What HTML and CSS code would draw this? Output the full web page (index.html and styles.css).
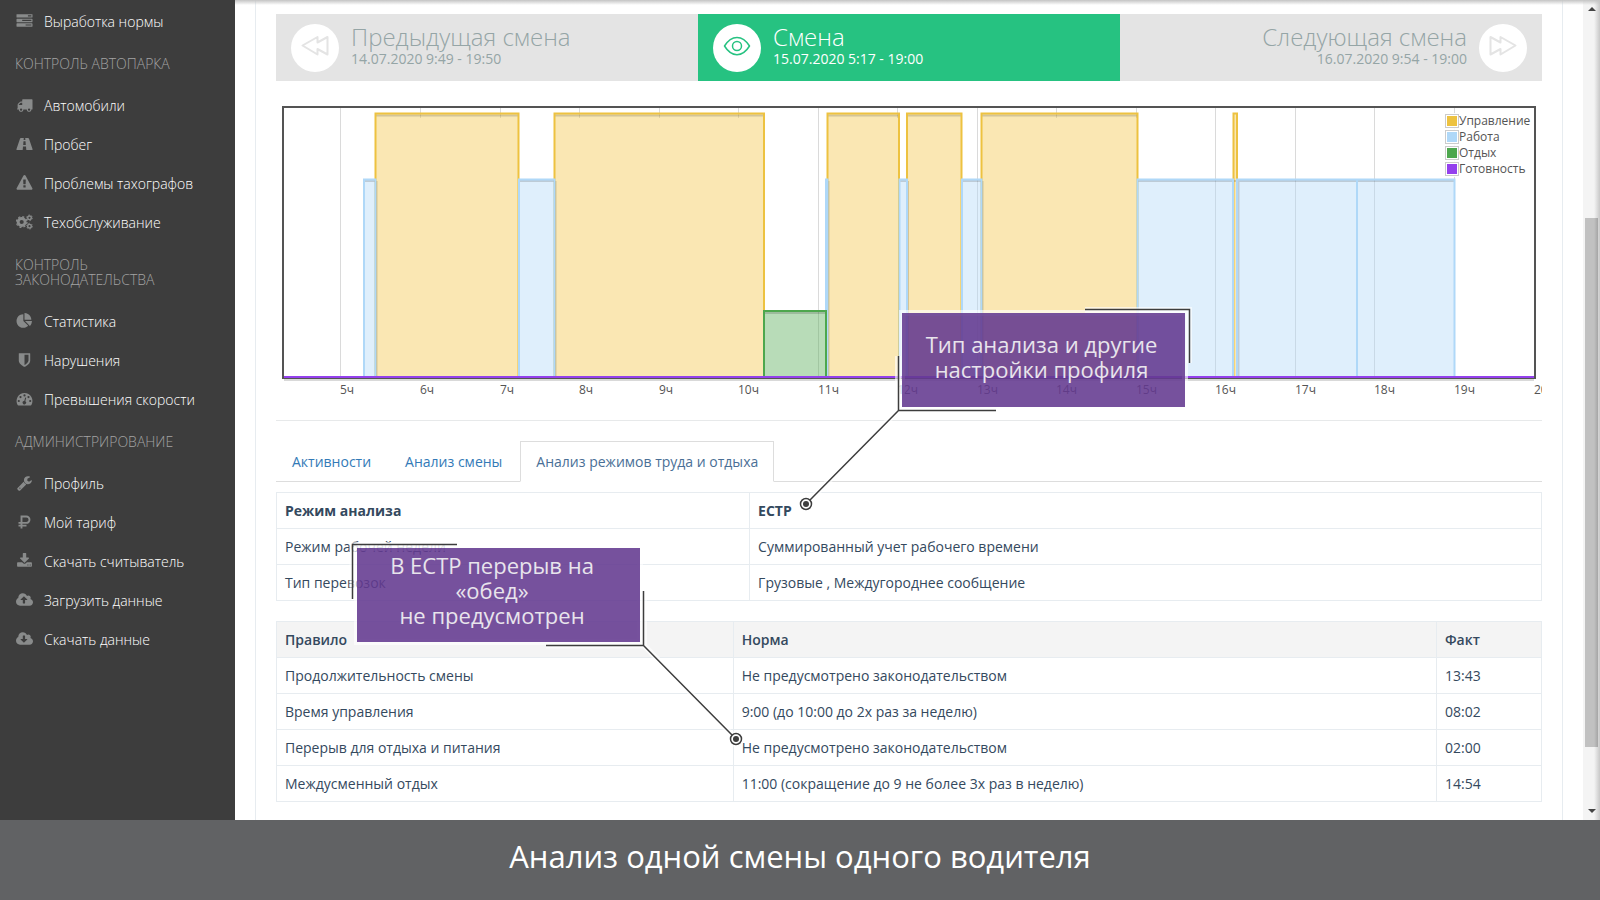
FILE: index.html
```html
<!DOCTYPE html>
<html lang="ru">
<head>
<meta charset="utf-8">
<title>Анализ смены</title>
<link rel="stylesheet" href="styles.css">
</head>
<body>
<div class="screen">
  <nav class="sidebar" aria-label="Меню">
    <a class="item" href="#"><svg class="ico" viewBox="0 0 1792 1792"><path d="M1024 1408h640v-128h-640v128zm-384-512h1024v-128h-1024v128zm640-512h384v-128h-384v128zm512 832v256q0 26-19 45t-45 19h-1664q-26 0-45-19t-19-45v-256q0-26 19-45t45-19h1664q26 0 45 19t19 45zm0-512v256q0 26-19 45t-45 19h-1664q-26 0-45-19t-19-45v-256q0-26 19-45t45-19h1664q26 0 45 19t19 45zm0-512v256q0 26-19 45t-45 19h-1664q-26 0-45-19t-19-45v-256q0-26 19-45t45-19h1664q26 0 45 19t19 45z"/></svg>Выработка нормы</a>
    <h2 class="group">Контроль автопарка</h2>
    <a class="item" href="#"><svg class="ico" viewBox="0 0 1792 1792"><path d="M640 1408q0-52-38-90t-90-38-90 38-38 90 38 90 90 38 90-38 38-90zm-384-512h384v-256h-158q-13 0-22 9l-195 195q-9 9-9 22v30zm1280 512q0-52-38-90t-90-38-90 38-38 90 38 90 90 38 90-38 38-90zm256-1088v1024q0 15-4 26.5t-13.5 18.5-16.5 11.5-23.5 6-22.5 2-25.5 0-22.5-.5q0 106-75 181t-181 75-181-75-75-181h-384q0 106-75 181t-181 75-181-75-75-181h-64q-3 0-22.5.5t-25.5 0-22.5-2-23.5-6-16.5-11.5-13.5-18.5-4-26.5q0-26 19-45t45-19v-320q0-8-.5-35t0-38 2.5-34.5 6.5-37 14-30.5 22.5-30l198-198q19-19 50.5-32t58.5-13h160v-192q0-26 19-45t45-19h1024q26 0 45 19t19 45z"/></svg>Автомобили</a>
    <a class="item" href="#"><svg class="ico" viewBox="0 0 16 16"><path fill-rule="evenodd" d="M4.4 2h2.9l-.2 2h1.8l-.2-2h2.9c.4 0 .7.3.9.7L16 13c.2.6 0 1-.5 1H9.8l-.3-3.500h-3L6.200 14H.5c-.5 0-.7-.4-.5-1L3.500 2.700c.2-.4.5-.7.9-.7zM7 5.200 6.700 9h2.600L9 5.200z"/></svg>Пробег</a>
    <a class="item" href="#"><svg class="ico" viewBox="0 0 1792 1792"><path d="M1024 1375v-190q0-14-9.5-23.5t-22.5-9.5h-192q-13 0-22.5 9.500t-9.500 23.500v190q0 14 9.500 23.500t22.500 9.500h192q13 0 22.500-9.500t9.500-23.500zm-2-374l18-459q0-12-10-19-13-11-24-11h-220q-11 0-24 11-10 7-10 21l17 457q0 10 10 16.500t24 6.500h185q14 0 23.500-6.500t10.500-16.500zm-14-934l768 1408q35 63-2 126-17 29-46.500 46t-63.500 17h-1536q-34 0-63.500-17t-46.500-46q-37-63-2-126l768-1408q17-31 47-49t65-18 65 18 47 49z"/></svg>Проблемы тахографов</a>
    <a class="item" href="#"><svg class="ico" viewBox="0 0 18 16"><g fill="none" stroke="currentColor"><circle cx="6" cy="8" r="3.700" stroke-width="3"/><circle cx="6" cy="8" r="5.600" stroke-width="1.400" stroke-dasharray="2.200 2.198"/><circle cx="14.300" cy="3.600" r="1.900" stroke-width="1.500"/><circle cx="14.300" cy="3.600" r="3" stroke-width="1" stroke-dasharray="1.570 1.571"/><circle cx="14.300" cy="12.400" r="1.900" stroke-width="1.500"/><circle cx="14.300" cy="12.400" r="3" stroke-width="1" stroke-dasharray="1.570 1.571"/></g></svg>Техобслуживание</a>
    <h2 class="group">Контроль законодательства</h2>
    <a class="item" href="#"><svg class="ico" viewBox="0 0 1792 1792"><path d="M768 890l546 546q-106 108-247.500 168t-298.500 60q-209 0-385.500-103t-279.500-279.500-103-385.500 103-385.500 279.500-279.500 385.500-103v762zm187 6h773q0 157-60 298.500t-168 247.500zm709-128h-768v-768q209 0 385.500 103t279.500 279.500 103 385.500z"/></svg>Статистика</a>
    <a class="item" href="#"><svg class="ico" viewBox="0 0 1792 1792"><path d="M1344 960v-640h-448v1137q119-63 213-137 235-184 235-360zm192-768v768q0 86-33.500 170.500t-83 150-118 127.500-126.500 103-121 77.500-89.500 49.500-42.500 20q-12 6-26 6t-26-6q-16-7-42.500-20t-89.500-49.500-121-77.500-126.500-103-118-127.500-83-150-33.500-170.500v-768q0-26 19-45t45-19h1152q26 0 45 19t19 45z"/></svg>Нарушения</a>
    <a class="item" href="#"><svg class="ico" viewBox="0 0 16 16"><path fill-rule="evenodd" d="M8 2a8 8 0 0 1 6.900 12c-.2.300-.4.400-.7.400H1.800c-.3 0-.5-.1-.7-.4A8 8 0 0 1 8 2zM2.300 8.900a1.100 1.100 0 1 0 0 2.200 1.100 1.100 0 0 0 0-2.200zM4 5a1.100 1.100 0 1 0 0 2.200A1.100 1.100 0 0 0 4 5zM8 3.300a1.100 1.100 0 1 0 0 2.200 1.100 1.100 0 0 0 0-2.200zM12 5a1.100 1.100 0 1 0 0 2.200A1.100 1.100 0 0 0 12 5zM13.700 8.900a1.100 1.100 0 1 0 0 2.200 1.100 1.100 0 0 0 0-2.200zM8.700 6.400l-.9 3.500a1.700 1.700 0 1 0 1 .3l.9-3.500z"/></svg>Превышения скорости</a>
    <h2 class="group">Администрирование</h2>
    <a class="item" href="#"><svg class="ico" viewBox="0 0 1792 1792"><path d="M448 1472q0-26-19-45t-45-19-45 19-19 45 19 45 45 19 45-19 19-45zm644-420l-682 682q-37 37-90 37-52 0-91-37l-106-108q-38-36-38-90 0-53 38-91l681-681q39 98 114.500 173.500t173.500 114.500zm634-435q0 39-23 106-47 134-164.500 217.500t-258.500 83.500q-185 0-316.500-131.500t-131.500-316.500 131.500-316.500 316.500-131.500q58 0 121.500 16.500t107.500 46.500q16 11 16 28t-16 28l-293 169v224l193 107q5-3 79-48.500t135.500-81 70.500-35.500q15 0 23.500 10t8.500 25z"/></svg>Профиль</a>
    <a class="item" href="#"><svg class="ico" viewBox="0 0 16 16"><path fill="none" stroke="currentColor" stroke-width="1.900" d="M5 14.500V2.500h4.800a3.200 3.200 0 0 1 0 6.400H2M2 11.600h8"/></svg>Мой тариф</a>
    <a class="item" href="#"><svg class="ico" viewBox="0 0 1792 1792"><path d="M1344 1344q0-26-19-45t-45-19-45 19-19 45 19 45 45 19 45-19 19-45zm256 0q0-26-19-45t-45-19-45 19-19 45 19 45 45 19 45-19 19-45zm128-224v320q0 40-28 68t-68 28h-1472q-40 0-68-28t-28-68v-320q0-40 28-68t68-28h465l135 136q58 56 136 56t136-56l136-136h464q40 0 68 28t28 68zm-325-569q17 41-14 70l-448 448q-18 19-45 19t-45-19l-448-448q-31-29-14-70 17-39 59-39h256v-448q0-26 19-45t45-19h256q26 0 45 19t19 45v448h256q42 0 59 39z"/></svg>Скачать считыватель</a>
    <a class="item" href="#"><svg class="ico" viewBox="-64 0 1920 1792"><path d="M1216 864q0-14-9-23l-352-352q-9-9-23-9t-23 9l-351 351q-10 12-10 24 0 14 9 23t23 9h224v352q0 13 9.500 22.500t22.500 9.500h192q13 0 22.500-9.500t9.500-22.500v-352h224q13 0 22.500-9.500t9.500-22.500zm640 288q0 159-112.500 271.500t-271.500 112.500h-1088q-185 0-316.500-131.500t-131.500-316.500q0-130 70-240t188-165q-2-30-2-43 0-212 150-362t362-150q156 0 285.500 87t188.500 231q71-62 166-62 106 0 181 75t75 181q0 76-41 138 130 31 213.500 135.500t83.500 238.500z"/></svg>Загрузить данные</a>
    <a class="item" href="#"><svg class="ico" viewBox="-64 0 1920 1792"><path d="M1216 928q0-14-9-23t-23-9h-224v-352q0-13-9.500-22.500t-22.500-9.500h-192q-13 0-22.500 9.500t-9.500 22.500v352h-224q-13 0-22.500 9.500t-9.500 22.500q0 14 9 23l352 352q9 9 23 9t23-9l351-351q10-12 10-24zm640 224q0 159-112.500 271.500t-271.500 112.500h-1088q-185 0-316.500-131.500t-131.500-316.500q0-130 70-240t188-165q-2-30-2-43 0-212 150-362t362-150q156 0 285.500 87t188.500 231q71-62 166-62 106 0 181 75t75 181q0 76-41 138 130 31 213.500 135.500t83.500 238.500z"/></svg>Скачать данные</a>
  </nav>

  <main class="main">
    <div class="panel">
      <div class="shifts">
        <a class="shift" href="#">
          <span class="disc"><svg viewBox="0 0 48 48"><path d="M11.500 21.500 26.500 13v5.500L36.500 13v17.500L26.500 25v5.500z"/></svg></span>
          <span class="shift-text"><span class="shift-title">Предыдущая смена</span><span class="shift-time">14.07.2020 9:49 - 19:50</span></span>
        </a>
        <a class="shift current" href="#">
          <span class="disc"><svg viewBox="0 0 48 48"><path d="M11.500 22c7-11.500 18-11.500 25 0-7 11.500-18 11.500-25 0z"/><circle cx="24" cy="22" r="4.500"/></svg></span>
          <span class="shift-text"><span class="shift-title">Смена</span><span class="shift-time">15.07.2020 5:17 - 19:00</span></span>
        </a>
        <a class="shift next" href="#">
          <span class="disc"><svg viewBox="0 0 48 48"><path d="M36.500 21.500 21.500 13v5.500L11.500 13v17.500L21.500 25v5.500z"/></svg></span>
          <span class="shift-text"><span class="shift-title">Следующая смена</span><span class="shift-time">16.07.2020 9:54 - 19:00</span></span>
        </a>
      </div>

      <svg class="chart" viewBox="276 100 1266 300" role="img" aria-label="График активностей смены">
        <path class="grid" d="M340.500 107V377M420.500 107V377M500.500 107V377M579.500 107V377M659.500 107V377M738.500 107V377M818.500 107V377M897.500 107V377M977.500 107V377M1056.500 107V377M1136.500 107V377M1215.500 107V377M1295.500 107V377M1374.500 107V377M1454.500 107V377"/>
        <g class="drive-fill">
          <path class="soft" d="M376 113h143v5H376zM555 113h209v5H555zM828 113h72v5h-72zM907 113h55v5h-55zM982 113h156v5H982zM1233 113h5v5h-5z"/>
          <path d="M376 118h143v259H376zM555 118h209v259H555zM828 118h72v259h-72zM907 118h55v259h-55zM982 118h156v259H982zM1233 118h5v259h-5z"/>
        </g>
        <path class="shade" d="M376 115.500H519M555 115.500H764M828 115.500H900M907 115.500H962M982 115.500H1138"/>
        <path class="drive" d="M375.500 377V113.500H518.500V377M554.500 377V113.500H764V377M827.500 377V113.500H899V377M907 377V113.500H961.500V377M981.500 377V113.500H1137.500V377M1233.500 377V113.500H1237V377"/>
        <path class="work-fill" d="M364 180h12v197h-12zM519 180h36v197h-36zM900 180h7v197h-7zM962 180h20v197h-20zM1138 180h95v197h-95zM1238 180h217v197h-217z"/>
        <path class="shade" d="M364 181H376M519 181H555M900 181H907M962 181H981M1138 181H1455M376.500 181V377M555.500 181V377M828.500 181V377M908 181V377M982.500 181V377M1238.500 181V377"/>
        <path class="work" d="M364 377V179.500H375.500V377M519 377V179.500H554.500V377M826 377V179.500H827.500V377M899.500 377V179.500H907V377M962 377V179.500H981.500V377M1137.500 377V179.500H1233V377M1237 377V179.500H1357V377M1357 179.500H1454.500V377"/>
        <path class="rest-fill" d="M764 311h62v66h-62z"/>
        <path class="shade" d="M765 313H825M284 380H1534"/>
        <path class="rest" d="M764 377V311H826V377"/>
        <rect class="frame" x="283" y="107" width="1252" height="271"/>
        <path class="ready" d="M284 377H1534"/>
        <g class="ticks">
          <text x="340" y="394">5ч</text><text x="420" y="394">6ч</text><text x="500" y="394">7ч</text><text x="579" y="394">8ч</text><text x="659" y="394">9ч</text><text x="738" y="394">10ч</text><text x="818" y="394">11ч</text><text x="897" y="394">12ч</text><text x="977" y="394">13ч</text><text x="1056" y="394">14ч</text><text x="1136" y="394">15ч</text><text x="1215" y="394">16ч</text><text x="1295" y="394">17ч</text><text x="1374" y="394">18ч</text><text x="1454" y="394">19ч</text><text x="1534" y="394">20ч</text>
        </g>
        <rect class="legend-bg" x="1445" y="113" width="84" height="64"/>
        <g class="legend-box"><rect x="1445.500" y="114.500" width="13" height="13"/><rect x="1445.500" y="130.500" width="13" height="13"/><rect x="1445.500" y="146.500" width="13" height="13"/><rect x="1445.500" y="162.500" width="13" height="13"/></g>
        <rect fill="#edc240" x="1447" y="116" width="10" height="10"/><rect fill="#afd8f8" x="1447" y="132" width="10" height="10"/><rect fill="#4da74d" x="1447" y="148" width="10" height="10"/><rect fill="#9440ed" x="1447" y="164" width="10" height="10"/>
        <g class="ticks"><text x="1459" y="125">Управление</text><text x="1459" y="141">Работа</text><text x="1459" y="157">Отдых</text><text x="1459" y="173">Готовность</text></g>
      </svg>

      <hr class="rule">

      <div class="tabs" role="tablist">
        <button class="tab" role="tab">Активности</button>
        <button class="tab" role="tab">Анализ смены</button>
        <button class="tab active" role="tab" aria-selected="true">Анализ режимов труда и отдыха</button>
      </div>

      <table class="table mode">
        <colgroup><col class="mode-name"><col></colgroup>
        <tbody>
          <tr><th>Режим анализа</th><th>ЕСТР</th></tr>
          <tr><td>Режим рабочей недели</td><td>Суммированный учет рабочего времени</td></tr>
          <tr><td>Тип перевозок</td><td>Грузовые , Междугороднее сообщение</td></tr>
        </tbody>
      </table>

      <table class="table rules">
        <colgroup><col class="rule-name"><col><col class="rule-fact"></colgroup>
        <thead><tr><th>Правило</th><th>Норма</th><th>Факт</th></tr></thead>
        <tbody>
          <tr><td>Продолжительность смены</td><td>Не предусмотрено законодательством</td><td>13:43</td></tr>
          <tr><td>Время управления</td><td>9:00 (до 10:00 до 2х раз за неделю)</td><td>08:02</td></tr>
          <tr><td>Перерыв для отдыха и питания</td><td>Не предусмотрено законодательством</td><td>02:00</td></tr>
          <tr><td>Междусменный отдых</td><td>11:00 (сокращение до 9 не более 3х раз в неделю)</td><td>14:54</td></tr>
        </tbody>
      </table>
    </div>
    <div class="scrollbar" aria-hidden="true">
      <svg class="arrow" viewBox="0 0 8 4"><path d="M0 4 4 0l4 4z"/></svg>
      <span class="thumb"></span>
      <svg class="arrow" viewBox="0 0 8 4"><path d="M0 0h8L4 4z"/></svg>
    </div>

    <div class="callout type">
      <svg class="leader" viewBox="0 0 400 210">
        <g class="halo"><path d="M289 7H393V60M102 53V107.500H200M102 107.500 10 201"/><rect x="106" y="10" width="283" height="94"/></g>
        <circle class="halo-dot" cx="10" cy="201" r="8"/>
        <path class="wire" d="M289 6.500H393.500V60M102.500 53V107.500H200M102.500 107.500 14 197"/>
        <circle class="ring" cx="10" cy="201" r="5.500"/><circle class="dot" cx="10" cy="201" r="3"/>
      </svg>
      <p class="note">Тип анализа и другие<br>настройки профиля</p>
    </div>
    <div class="callout lunch">
      <svg class="leader" viewBox="0 0 400 210">
        <g class="halo"><path d="M6.500 60V7H111M200 107.500H298V53M298 107.500 390 201"/><rect x="11" y="10" width="283" height="94"/></g>
        <circle class="halo-dot" cx="390" cy="201" r="8"/>
        <path class="wire" d="M6.500 61V6.500H111M200 107.500H297.500V53M297.500 107.500 386 197"/>
        <circle class="ring" cx="390" cy="201" r="5.500"/><circle class="dot" cx="390" cy="201" r="3"/>
      </svg>
      <p class="note">В ЕСТР перерыв на<br>«обед»<br>не предусмотрен</p>
    </div>
  </main>
</div>
<footer class="caption">Анализ одной смены одного водителя</footer>
</body>
</html>
```

FILE: styles.css
```css
* { box-sizing: border-box; }

body {
  margin: 0;
  min-height: 100vh;
  display: flex;
  flex-direction: column;
  font-family: "Open Sans", "Noto Sans", sans-serif;
  font-size: 14px;
  line-height: 19px;
  color: #34495e;
  background: #fff;
}

a { color: inherit; text-decoration: none; }

.screen { display: flex; flex: 1; }

/* Sidebar */
.sidebar {
  flex: 0 0 235px;
  padding-top: 2px;
  background: #3d3d3d;
}
.item {
  display: flex;
  align-items: center;
  gap: 11px;
  height: 39px;
  padding-left: 16px;
  font-weight: 300;
  color: #fff;
}
.ico {
  width: 17px;
  height: 16px;
  margin-bottom: 2px;
  color: #898b8b;
  fill: currentColor;
}
.group {
  margin: 0;
  padding: 15px;
  font-size: 14px;
  font-weight: 300;
  line-height: 15px;
  text-transform: uppercase;
  color: #a3a3a3;
}

/* Content */
.main {
  position: relative;
  display: flex;
  flex: 1;
  padding-left: 20px;
}
.main::before {
  content: "";
  position: absolute;
  inset: 0 0 auto;
  height: 5px;
  background: linear-gradient(#c4c4c4, #fff0);
}
.panel {
  flex: 1;
  padding: 14px 20px 18px;
  border: solid #e7ecf0;
  border-width: 0 1px;
}

.shifts { display: grid; grid-template-columns: repeat(3, 1fr); }
.shift {
  display: flex;
  gap: 12px;
  height: 67px;
  padding: 10px 15px;
  color: #95a5a6;
  background: #e4e4e4;
}
.disc {
  width: 48px;
  height: 48px;
  border-radius: 50%;
  background: #fff;
}
.disc svg {
  display: block;
  fill: none;
  stroke: #e4e4e4;
  stroke-width: 2;
  stroke-linejoin: round;
}
.current { color: #fff; background: #26c281; }
.current .disc svg { stroke: #26c281; stroke-width: 1.5; }
.next { flex-direction: row-reverse; text-align: right; }
.shift-text { display: flex; flex-direction: column; }
.shift-title { font-size: 24px; font-weight: 300; line-height: 26px; }
.shift-time { line-height: 18px; }

/* Chart */
.chart {
  display: block;
  width: 100%;
  margin-top: 19px;
}
.chart path { fill: none; }
.chart .grid { stroke: #dadada; }
.chart .drive-fill path { fill: #fae7b3; }
.chart .drive-fill .soft { fill: #edc240; fill-opacity: .4; }
.chart .drive { stroke: #edc240; stroke-width: 2; }
.chart .work-fill { fill: #afd8f8; fill-opacity: .4; }
.chart .work { stroke: #afd8f8; stroke-width: 2; }
.chart .rest-fill { fill: #4da74d; fill-opacity: .4; }
.chart .rest { stroke: #4da74d; stroke-width: 2; }
.chart .shade { stroke: #000; stroke-opacity: .15; stroke-width: 2; }
.chart .frame { fill: none; stroke: #545454; stroke-width: 2; }
.chart .ready { stroke: #9440ed; stroke-width: 2; }
.chart .legend-bg { fill: #fff; fill-opacity: .85; }
.chart .legend-box { fill: #fff; stroke: #ccc; }
.ticks { font-size: 12px; fill: #545454; }

.rule {
  height: 1px;
  margin: 20px 0;
  border: 0;
  background: #e7e9ea;
}

/* Tabs */
.tabs {
  display: flex;
  gap: 2px;
  border-bottom: 1px solid #ddd;
}
.tab {
  margin-bottom: -1px;
  padding: 10px 15px;
  border: 1px solid transparent;
  font: inherit;
  color: #337ab7;
  background: none;
}
.tab.active {
  color: #4a6f96;
  border-color: #ddd #ddd #fff;
  background: #fff;
}

/* Tables */
.table {
  width: 100%;
  table-layout: fixed;
  border-collapse: collapse;
}
.table th, .table td {
  padding: 8px;
  border: 1px solid #e7ecf0;
  text-align: left;
}
.table th { font-weight: 600; }
.mode { margin-top: 10px; }
.mode th { font-weight: 700; }
.rules { margin-top: 20px; }
.rules thead { background: #f4f4f4; }
.mode-name { width: 37.4%; }
.rule-name { width: 36.1%; }
.rule-fact { width: 105px; }

/* Scrollbar */
.scrollbar {
  display: flex;
  flex-direction: column;
  align-items: center;
  justify-content: space-between;
  width: 17px;
  margin-left: 20px;
  padding: 7px 0;
  background: linear-gradient(90deg, #f4f4f4 65%, #c8c8c8);
}
.arrow { width: 8px; height: 4px; fill: #444; }
.thumb {
  width: 13px;
  height: 529px;
  margin-top: 144px;
  background: linear-gradient(90deg, #c1c1c1 70%, #a5a5a5);
}

/* Callouts lie over the page */
.callout {
  position: absolute;
  width: 400px;
  height: 210px;
}
.type { left: 561px; top: 303px; }
.lunch { left: 111px; top: 538px; }
.leader { position: absolute; inset: 0; width: 100%; height: 100%; }
.halo { fill: none; stroke: #fff; stroke-opacity: .6; stroke-width: 6; }
.halo-dot { fill: #fff; fill-opacity: .8; }
.wire { fill: none; stroke: #3d3d3d; stroke-width: 1.5; }
.ring { fill: #fff; stroke: #3d3d3d; stroke-width: 1.5; }
.dot { fill: #3d3d3d; }
.note {
  position: absolute;
  top: 10px;
  width: 283px;
  height: 94px;
  margin: 0;
  font-size: 22px;
  line-height: 25px;
  text-align: center;
  color: #e8e4ec;
  background: rgba(99, 57, 144, .88);
}
.type .note { left: 106px; padding: 19px 4px 0 0; }
.lunch .note { left: 11px; padding: 5px 13px 0 0; }

.caption {
  height: 80px;
  padding-top: 14px;
  font-size: 31px;
  line-height: 44px;
  text-align: center;
  color: #fff;
  background: #616264;
}
```
